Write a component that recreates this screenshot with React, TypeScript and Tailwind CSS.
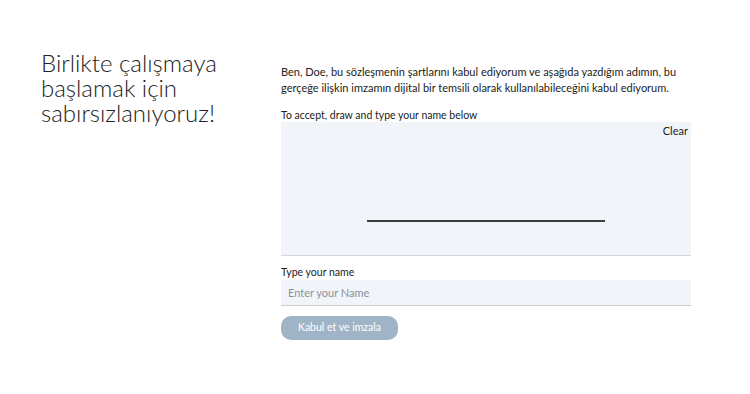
import React from "react";

export default function App() {
  return (
    <div
      className="w-[750px] h-[394px] bg-white text-[#1a1a1a] overflow-hidden"
      style={{ fontFamily: "Lato, 'Noto Sans', sans-serif" }}
    >
      <div className="flex pt-[50px] pl-[41px]">
        <div className="w-[240px] shrink-0">
          <h1 className="text-[24px] leading-[25px] font-light text-[#222]">
            Birlikte çalışmaya
            <br />
            başlamak için
            <br />
            sabırsızlanıyoruz!
          </h1>
        </div>
        <div className="w-[410px] shrink-0 pt-[14px]">
          <p className="text-[11px] leading-[16px] text-[#222]">
            Ben, Doe, bu sözleşmenin şartlarını kabul ediyorum ve aşağıda yazdığım adımın, bu
            gerçeğe ilişkin imzamın dijital bir temsili olarak kullanılabileceğini kabul ediyorum.
          </p>
          <div className="mt-[12px] text-[10.5px] leading-[14px] text-[#222]">
            To accept, draw and type your name below
          </div>
          <div className="mt-[0px] h-[134px] bg-[#f1f5f9] border-b border-[#d4d8dd] flex flex-col">
            <div className="flex justify-end pr-[3px] pt-[2px]">
              <span className="text-[11px] leading-[14px] text-[#222]">Clear</span>
            </div>
            <div className="flex-1 flex items-end justify-center pb-[33px]">
              <div className="w-[238px] h-[2px] bg-[#3a3d40]" />
            </div>
          </div>
          <div className="mt-[9px] text-[10.5px] leading-[14px] text-[#222]">Type your name</div>
          <input
            className="mt-[1px] w-full h-[26px] bg-[#f1f5f9] border-b border-[#c9cdd2] px-[7px] text-[11px] outline-none placeholder:text-[#8a9199]"
            placeholder="Enter your Name"
          />
          <button className="mt-[10px] w-[117px] h-[24px] rounded-[10px] bg-[#a0b4c8] text-white text-[10.5px]">
            Kabul et ve imzala
          </button>
        </div>
      </div>
    </div>
  );
}
